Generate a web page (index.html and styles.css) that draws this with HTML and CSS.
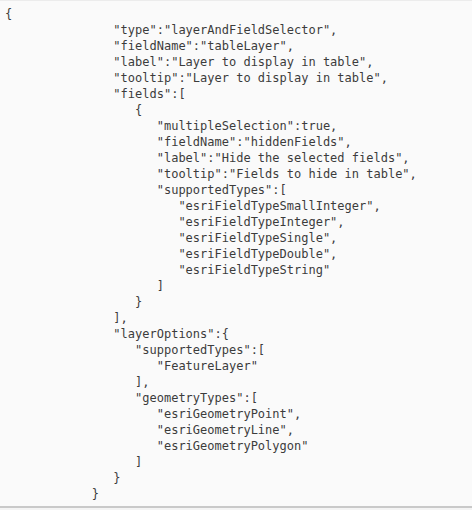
FILE: index.html
```html
<!DOCTYPE html>
<html>
<head>
<meta charset="utf-8">
<link rel="stylesheet" href="styles.css">
</head>
<body>
<div class="code-block"><pre class="code">{
               "type":"layerAndFieldSelector",
               "fieldName":"tableLayer",
               "label":"Layer to display in table",
               "tooltip":"Layer to display in table",
               "fields":[
                  {
                     "multipleSelection":true,
                     "fieldName":"hiddenFields",
                     "label":"Hide the selected fields",
                     "tooltip":"Fields to hide in table",
                     "supportedTypes":[
                        "esriFieldTypeSmallInteger",
                        "esriFieldTypeInteger",
                        "esriFieldTypeSingle",
                        "esriFieldTypeDouble",
                        "esriFieldTypeString"
                     ]
                  }
               ],
               "layerOptions":{
                  "supportedTypes":[
                     "FeatureLayer"
                  ],
                  "geometryTypes":[
                     "esriGeometryPoint",
                     "esriGeometryLine",
                     "esriGeometryPolygon"
                  ]
               }
            }</pre></div>
</body>
</html>
```
FILE: styles.css
```css
html, body {
  margin: 0;
  padding: 0;
  background: #f4f4f4;
}
.code-block {
  box-sizing: border-box;
  height: 508px;
  background: #fafafa;
  border-top: 1px solid #ececec;
  border-bottom: 2px solid #c9c9c9;
  padding: 5px 0 0 5px;
}
.code {
  margin: 0;
  font-family: "DejaVu Sans Mono", "Liberation Mono", monospace;
  font-size: 12px;
  line-height: 16px;
  color: #3c3c3c;
}
```
